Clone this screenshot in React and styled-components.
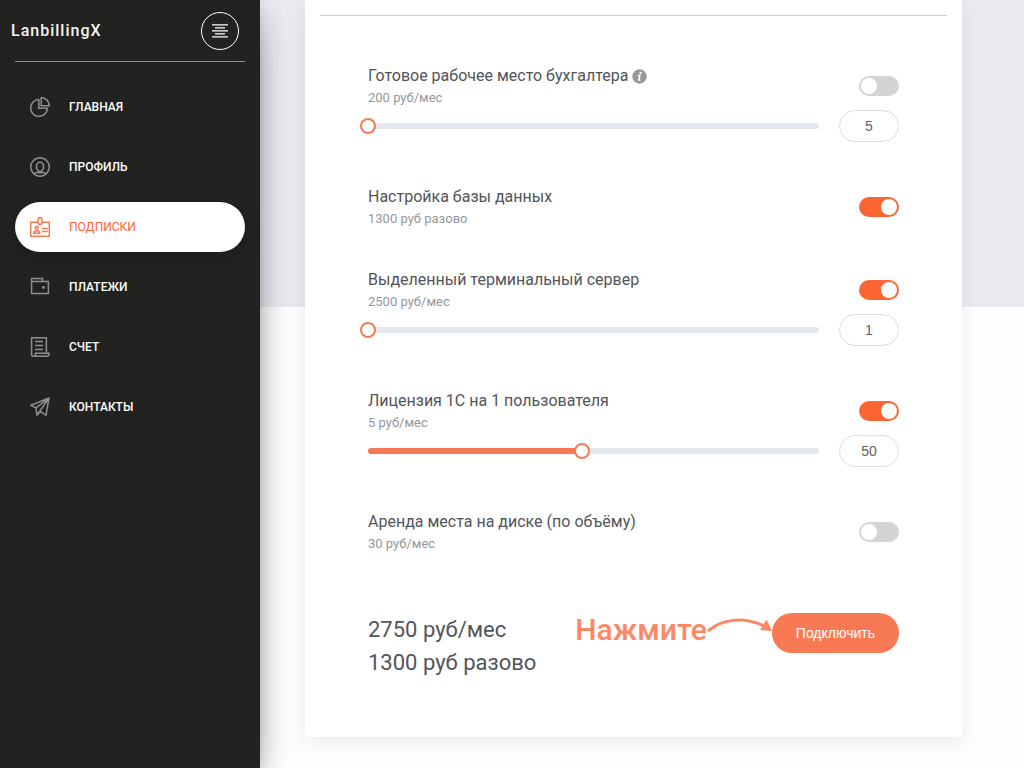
import React, { useState } from 'react';
import styled, { createGlobalStyle, css } from 'styled-components';

const ACCENT = '#f77a54';
const ACCENT_BRIGHT = '#fb6433';
const CONTROL_FONT = '"Liberation Sans", Arial, sans-serif';

const GlobalStyle = createGlobalStyle`
    * {
        box-sizing: border-box;
    }
    body {
        margin: 0;
        background: #fefefe;
        color: #525559;
        font-family: Roboto, "Liberation Sans", sans-serif;
        font-size: 14px;
    }
    button, input {
        font-family: ${CONTROL_FONT};
    }
`

const Layout = styled.div`
    display: flex;
    min-height: 100vh;
`

const Sidebar = styled.aside`
    flex: 0 0 260px;
    background: #222220;
    box-shadow: 0 16px 38px -12px rgba(0, 0, 0, 0.56), 0 4px 25px 0 rgba(0, 0, 0, 0.12), 0 8px 10px -5px rgba(0, 0, 0, 0.2);
    z-index: 1;
`

const SidebarHeader = styled.div`
    display: flex;
    align-items: center;
    justify-content: space-between;
    height: 61px;
    padding: 0 21px 0 11px;
`

const Brand = styled.a`
    color: #f4f4f2;
    font-size: 16px;
    font-weight: 500;
    letter-spacing: 1px;
    line-height: 20px;
    text-decoration: none;
`

const MenuButton = styled.button`
    display: flex;
    align-items: center;
    justify-content: center;
    width: 38px;
    height: 38px;
    padding: 0;
    border: 1px solid #fff;
    border-radius: 50%;
    background: none;
    color: #fff;
    cursor: pointer;
`

const Nav = styled.nav`
    display: flex;
    flex-direction: column;
    gap: 10px;
    margin: 0 15px;
    padding-top: 20px;
    border-top: 1px solid #8c8c8b;
`

const NavLink = styled.a`
    display: flex;
    align-items: center;
    gap: 19px;
    height: 50px;
    padding: 0 15px;
    border-radius: 25px;
    color: #fff;
    font-size: 12px;
    font-weight: 500;
    line-height: 20px;
    text-decoration: none;
    text-transform: uppercase;

    svg {
        color: #8f8f8e;
    }

    ${props => props.$active && css`
        background: #fff;
        box-shadow: 0 4px 20px rgba(0, 0, 0, 0.14);
        color: ${ACCENT_BRIGHT};
        font-weight: 400;

        svg {
            color: ${ACCENT};
        }
    `}
`

const Main = styled.main`
    flex: 1;
    min-width: 0;
    padding: 0 62px 30px 45px;
    background: linear-gradient(#eaebf1, #eaebf1) top / 100% 307px no-repeat;
`

const Card = styled.section`
    padding: 15px 15px 58px;
    border-radius: 0 0 4px 4px;
    background: #fff;
    box-shadow: 0 6px 20px rgba(0, 0, 0, 0.08);
`

const CardBody = styled.div`
    padding: 47px 48px 0;
    border-top: 1px solid #cfcfcf;
`

const Service = styled.div`
    padding-bottom: 36px;
`

const ServiceHead = styled.div`
    display: flex;
    align-items: center;
    justify-content: space-between;
    padding-bottom: 1px;
`

const ServiceText = styled.div`
    padding: 1px 0;
`

const ServiceTitle = styled.label`
    display: flex;
    align-items: center;
    gap: 4px;
    font-size: 16px;
    line-height: 24px;
`

const ServicePrice = styled.div`
    color: #94969a;
    font-size: 13px;
    line-height: 20px;
`

const Toggle = styled.input`
    appearance: none;
    flex: none;
    width: 40px;
    height: 20px;
    margin: 0;
    padding: 2px;
    border-radius: 10px;
    background: #d4d4d4;
    cursor: pointer;

    &::before {
        content: "";
        display: block;
        width: 16px;
        height: 16px;
        border-radius: 50%;
        background: #fff;
    }
    &:checked {
        background: ${ACCENT_BRIGHT};
    }
    &:checked::before {
        margin-left: 20px;
    }
`

const AmountRow = styled.div`
    display: flex;
    align-items: center;
    gap: 20px;
    padding-bottom: 6px;
`

const Track = styled.div`
    flex: 1;
    display: flex;
    align-items: center;
    height: 6px;
    border-radius: 3px;
    background: linear-gradient(${ACCENT}, ${ACCENT}) left / var(--fill) 100% no-repeat #e4e7ed;
`

/* wider than the track by one thumb, so the thumb is centred on the track ends */
const Range = styled.input`
    appearance: none;
    flex: 1;
    min-width: 0;
    height: 16px;
    margin: 0 -8px;
    background: none;
    cursor: pointer;

    &::-webkit-slider-thumb {
        appearance: none;
        width: 16px;
        height: 16px;
        border: 2px solid ${ACCENT};
        border-radius: 50%;
        background: #fff;
    }
`

const Amount = styled.input`
    width: 60px;
    height: 32px;
    padding: 0;
    border: 1px solid #dcdfe6;
    border-radius: 16px;
    background: #fff;
    color: #606266;
    font-size: 14px;
    text-align: center;
`

const Summary = styled.div`
    display: flex;
    align-items: flex-start;
    padding-top: 21px;
`

const Totals = styled.div`
    flex: 1;
    font-size: 22px;
    line-height: 33px;
`

const Hint = styled.div`
    display: flex;
    color: #ff8763;
    font-size: 30px;
    font-weight: 500;
    line-height: 33px;
`

const ConnectButton = styled.button`
    height: 40px;
    padding: 0 24px;
    border: 0;
    border-radius: 20px;
    background: ${ACCENT};
    color: #fff;
    font-size: 14px;
    cursor: pointer;
`

const Icon = ({ children }) => (
    <svg width="20" height="20" viewBox="0 0 20 20" fill="none" stroke="currentColor" strokeWidth="1.5" aria-hidden="true">
        {children}
    </svg>
)

const PieIcon = () => (
    <Icon>
        <path d="M8.8 2.6A8.4 8.4 0 1 0 17.4 11.2H8.8z" />
        <path d="M11.2 .7A8.2 8.2 0 0 1 19.3 8.8H11.2z" />
    </Icon>
)

const ProfileIcon = () => (
    <Icon>
        <circle cx="10" cy="10" r="9.3" />
        <rect x="6.6" y="5.2" width="6.8" height="9" rx="3.4" />
        <path d="M3.8 16.8c1.2-1 2.6-1 4.4-1.5q1.8 1 3.6 0c1.8.5 3.2.5 4.4 1.5" />
    </Icon>
)

const BadgeIcon = () => (
    <Icon>
        <path d="M8 5.2H.7v14.1h18.6V5.2H12" />
        <rect x="8" y=".7" width="4" height="6.6" rx="1.8" />
        <circle cx="6.7" cy="10.8" r="1.5" />
        <path d="M3.6 16.3c0-1.8 1.2-2.6 3.1-2.6s3.1.8 3.1 2.6zM12 11.5h5.8M12 14.5h5.8" />
    </Icon>
)

const WalletIcon = () => (
    <Icon>
        <path d="M1.6 4.6V1.6h10.8v3M1.6 4.6h16.8v11.8H1.6z" />
        <circle cx="13.5" cy="10.5" r="1.4" fill="currentColor" stroke="none" />
    </Icon>
)

const BillIcon = () => (
    <Icon>
        <path d="M16.4 15.6V.7H1.6v17q0 1.6 1.6 1.6h14q1.8 0 1.8-3H5.4v1.4q0 1.6-1.6 1.6M5 4.5h8M5 8.5h8M5 12.5h8" />
    </Icon>
)

const PlaneIcon = () => (
    <Icon>
        <path d="M19 1 .9 8.3l5 2.6L19 1l-3 17.2-6.7-4.4M19 1 6.9 18.2 5.9 10.9M6.9 18.2l3.4-3.8" strokeLinejoin="round" />
    </Icon>
)

const InfoIcon = () => (
    <svg width="15" height="15" viewBox="0 0 15 15" aria-hidden="true">
        <circle cx="7.5" cy="7.5" r="7.2" fill="#999" />
        <circle cx="8.6" cy="3.9" r="1.2" fill="#fff" />
        <path d="M5.7 6.5h2.2L6.7 11h1.7" fill="none" stroke="#fff" strokeWidth="1.5" />
    </svg>
)

const MenuIcon = () => (
    <svg width="16" height="14" viewBox="0 0 16 14" stroke="currentColor" strokeWidth="1.3" aria-hidden="true">
        <path d="M0 .8h16M3 3.8h10M0 6.8h16M3 9.8h10M0 12.8h16" />
    </svg>
)

const Arrow = () => (
    <svg width="65" height="33" viewBox="0 0 65 33" fill="none" aria-hidden="true">
        <path d="M1 18C16 5 38 4 57 13" stroke="#ff8763" strokeWidth="3" />
        <path d="M59.5 6.5 65 18 53 17z" fill="#ff8763" />
    </svg>
)

const navItems = [
    { title: 'Главная', icon: PieIcon },
    { title: 'Профиль', icon: ProfileIcon },
    { title: 'Подписки', icon: BadgeIcon, active: true },
    { title: 'Платежи', icon: WalletIcon },
    { title: 'Счет', icon: BillIcon },
    { title: 'Контакты', icon: PlaneIcon },
]

const initialServices = [
    { id: 'workplace', title: 'Готовое рабочее место бухгалтера', price: '200 руб/мес', info: true, enabled: false, min: 5, max: 100, amount: 5 },
    { id: 'database', title: 'Настройка базы данных', price: '1300 руб разово', enabled: true },
    { id: 'terminal', title: 'Выделенный терминальный сервер', price: '2500 руб/мес', enabled: true, min: 1, max: 10, amount: 1 },
    { id: 'license', title: 'Лицензия 1С на 1 пользователя', price: '5 руб/мес', enabled: true, min: 5, max: 100, amount: 50 },
    { id: 'disk', title: 'Аренда места на диске (по объёму)', price: '30 руб/мес', enabled: false },
]

const ServiceRow = ({ service, onChange }) => {
    const { id, title, price, info, enabled, min, max, amount } = service
    const fill = (amount - min) / (max - min) * 100

    return (
        <Service>
            <ServiceHead>
                <ServiceText>
                    <ServiceTitle htmlFor={id}>
                        {title}
                        {info && <InfoIcon />}
                    </ServiceTitle>
                    <ServicePrice>{price}</ServicePrice>
                </ServiceText>
                <Toggle
                    id={id}
                    type="checkbox"
                    checked={enabled}
                    onChange={e => onChange({ enabled: e.target.checked })}
                />
            </ServiceHead>
            {amount !== undefined && (
                <AmountRow>
                    <Track style={{ '--fill': `${fill}%` }}>
                        <Range
                            type="range"
                            aria-label={title}
                            min={min}
                            max={max}
                            value={amount}
                            onChange={e => onChange({ amount: Number(e.target.value) })}
                        />
                    </Track>
                    <Amount
                        type="text"
                        inputMode="numeric"
                        aria-label={title}
                        value={amount}
                        onChange={e => onChange({ amount: Number(e.target.value) || min })}
                    />
                </AmountRow>
            )}
        </Service>
    )
}

const App = () => {
    const [services, setServices] = useState(initialServices)

    const update = (id, patch) => {
        setServices(services.map(item => item.id === id ? { ...item, ...patch } : item))
    }

    return (
        <Layout>
            <GlobalStyle />
            <Sidebar>
                <SidebarHeader>
                    <Brand href="#">LanbillingX</Brand>
                    <MenuButton type="button" aria-label="Меню">
                        <MenuIcon />
                    </MenuButton>
                </SidebarHeader>
                <Nav>
                    {navItems.map(({ title, icon: ItemIcon, active }) => (
                        <NavLink key={title} href="#" $active={active}>
                            <ItemIcon />
                            {title}
                        </NavLink>
                    ))}
                </Nav>
            </Sidebar>
            <Main>
                <Card>
                    <CardBody>
                        {services.map(service => (
                            <ServiceRow
                                key={service.id}
                                service={service}
                                onChange={patch => update(service.id, patch)}
                            />
                        ))}
                        <Summary>
                            <Totals>
                                <div>2750 руб/мес</div>
                                <div>1300 руб разово</div>
                            </Totals>
                            <Hint>
                                Нажмите
                                <Arrow />
                            </Hint>
                            <ConnectButton type="button">Подключить</ConnectButton>
                        </Summary>
                    </CardBody>
                </Card>
            </Main>
        </Layout>
    )
}

export default App;
